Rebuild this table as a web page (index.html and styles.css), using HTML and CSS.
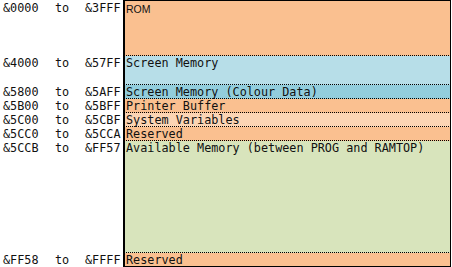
FILE: index.html
```html
<!DOCTYPE html>
<html>
<head>
<meta charset="utf-8">
<link rel="stylesheet" href="styles.css">
</head>
<body>
<div class="map">
  <div class="row r-rom">
    <div class="addr"><span class="a1">&amp;0000</span><span class="a2">to</span><span class="a3">&amp;3FFF</span></div>
    <div class="cell rom first">ROM</div>
  </div>
  <div class="row r-screen">
    <div class="addr"><span class="a1">&amp;4000</span><span class="a2">to</span><span class="a3">&amp;57FF</span></div>
    <div class="cell screen">Screen Memory</div>
  </div>
  <div class="row r-small">
    <div class="addr"><span class="a1">&amp;5800</span><span class="a2">to</span><span class="a3">&amp;5AFF</span></div>
    <div class="cell colour">Screen Memory (Colour Data)</div>
  </div>
  <div class="row r-small">
    <div class="addr"><span class="a1">&amp;5B00</span><span class="a2">to</span><span class="a3">&amp;5BFF</span></div>
    <div class="cell orange">Printer Buffer</div>
  </div>
  <div class="row r-small">
    <div class="addr"><span class="a1">&amp;5C00</span><span class="a2">to</span><span class="a3">&amp;5CBF</span></div>
    <div class="cell light">System Variables</div>
  </div>
  <div class="row r-small">
    <div class="addr"><span class="a1">&amp;5CC0</span><span class="a2">to</span><span class="a3">&amp;5CCA</span></div>
    <div class="cell orange">Reserved</div>
  </div>
  <div class="row r-avail">
    <div class="addr"><span class="a1">&amp;5CCB</span><span class="a2">to</span><span class="a3">&amp;FF57</span></div>
    <div class="cell green">Available Memory (between PROG and RAMTOP)</div>
  </div>
  <div class="row r-last">
    <div class="addr addr-bottom"><span class="a1">&amp;FF58</span><span class="a2">to</span><span class="a3">&amp;FFFF</span></div>
    <div class="cell orange last">Reserved</div>
  </div>
</div>
</body>
</html>
```

FILE: styles.css
```css
html, body {
  margin: 0;
  padding: 0;
  background: #ffffff;
}

.map {
  width: 452px;
  height: 267px;
  display: flex;
  flex-direction: column;
  font-family: "DejaVu Sans Mono", "Liberation Mono", monospace;
  font-size: 11.8px;
  color: #111111;
}

.row {
  display: flex;
}

.addr {
  width: 123px;
  display: flex;
  align-items: flex-start;
  padding-top: 1px;
  line-height: 13px;
  box-sizing: border-box;
}

.addr-bottom {
  align-self: flex-end;
}

.a1 {
  width: 52px;
  padding-left: 3px;
}

.a2 {
  width: 30px;
}

.a3 {
  width: 38px;
}

.cell {
  width: 328px;
  box-sizing: border-box;
  border-left: 2px solid #000;
  border-right: 1px solid #000;
  border-bottom: 1px dotted #000;
  padding-left: 1px;
  padding-top: 1px;
  line-height: 12px;
  white-space: nowrap;
}

.cell.first {
  border-top: 1px solid #000;
}

.cell.last {
  border-bottom: 1px solid #000;
}

.r-rom { height: 56px; }
.r-screen { height: 29px; }
.r-small { height: 14px; }
.r-avail { height: 113px; }
.r-last { height: 14px; }

.r-rom .addr { padding-top: 2px; }
.r-screen .addr { padding-top: 1px; }

.rom {
  background: #fac090;
  font-family: "Liberation Sans", Arial, sans-serif;
  font-size: 10.5px;
  padding-top: 2px;
}

.screen { background: #b7dee8; }
.colour { background: #92cddc; }
.orange { background: #fac090; }
.light { background: #fcd5b4; }
.green { background: #d8e4bc; }
```
